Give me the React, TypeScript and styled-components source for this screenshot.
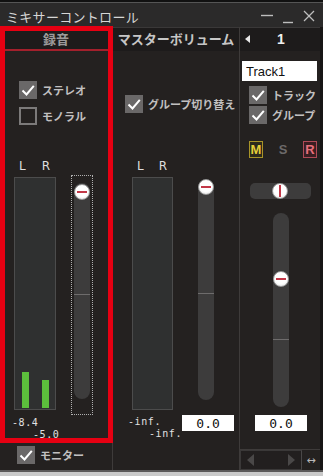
import styled, { createGlobalStyle } from "styled-components";

const Global = createGlobalStyle`
  html, body { margin: 0; padding: 0; background: #c9c9c9; }
  body { font-family: "Noto Sans CJK JP", "Noto Sans", sans-serif; }
`;

const JP = `"Noto Sans CJK JP", "Noto Sans", sans-serif`;
const MONO = `"DejaVu Sans Mono", "Liberation Mono", monospace`;

const CheckIcon = () => (
  <svg width="14" height="14" viewBox="0 0 14 14">
    <path d="M1.5 7.5 L5.5 11.5 L12.8 2.8" stroke="#fff" strokeWidth="2" fill="none" />
  </svg>
);

const Check = ({ checked, label, $mt = 0, $ml = 0 }: { checked?: boolean; label: string; $mt?: number; $ml?: number }) => (
  <CheckRow $mt={$mt} $ml={$ml}>
    <Box $checked={!!checked}>{checked && <CheckIcon />}</Box>
    <CheckLabel>{label}</CheckLabel>
  </CheckRow>
);

const Fader = ({ knob, tick, h, dotted }: { knob: number; tick: number; h: number; dotted?: boolean }) => {
  const track = (
    <Track $h={h}>
      <Tick $top={tick} />
      <Knob $top={knob} />
    </Track>
  );
  return dotted ? <DottedBox>{track}</DottedBox> : <PlainFader>{track}</PlainFader>;
};

export default function App() {
  return (
    <>
      <Global />
      <Window>
        <TopStrip />
        <TitleBar>
          <Title>ミキサーコントロール</Title>
          <WinButtons>
            <svg width="60" height="24" viewBox="0 0 60 24">
              <line x1="2" y1="12.5" x2="14" y2="12.5" stroke="#bdbdbd" strokeWidth="1.4" />
              <line x1="24" y1="19.5" x2="34" y2="19.5" stroke="#bdbdbd" strokeWidth="1.4" />
              <line x1="45" y1="8" x2="55" y2="18" stroke="#bdbdbd" strokeWidth="1.3" />
              <line x1="55" y1="8" x2="45" y2="18" stroke="#bdbdbd" strokeWidth="1.3" />
            </svg>
          </WinButtons>
        </TitleBar>

        <Columns>
          {/* 録音 */}
          <Column>
            <Tab $active>録音</Tab>
            <Check checked label="ステレオ" $mt={30} $ml={19} />
            <Check label="モノラル" $mt={8} $ml={19} />
            <Strip $mt={30} $ml={14} $gap={15}>
              <MeterBlock>
                <LR $w={42}>
                  <span>L</span>
                  <span>R</span>
                </LR>
                <Meter $w={42} $h={233}>
                  <Bar $level={36} />
                  <Bar $level={28} />
                </Meter>
              </MeterBlock>
              <FaderSlot $mt={20}>
                <Fader dotted h={216} knob={1} tick={111} />
              </FaderSlot>
            </Strip>
            <Readouts $ml={12} $mt={2}>
              <Reading>-8.4</Reading>
              <Reading $indent>-5.0</Reading>
            </Readouts>
            <Check checked label="モニター" $mt={5} $ml={17} />
          </Column>

          {/* マスターボリューム */}
          <Column $divider>
            <Tab>マスターボリューム</Tab>
            <Check checked label="グループ切り替え" $mt={44} $ml={12} />
            <Strip $mt={42} $ml={19} $gap={25}>
              <MeterBlock>
                <LR $w={41}>
                  <span>L</span>
                  <span>R</span>
                </LR>
                <Meter $w={41} $h={233} />
              </MeterBlock>
              <FaderSlot $mt={25}>
                <Fader h={220} knob={-1} tick={113} />
              </FaderSlot>
            </Strip>
            <ReadRow>
              <Readouts $ml={15} $mt={2}>
                <Reading>-inf.</Reading>
                <Reading $indent>-inf.</Reading>
              </Readouts>
              <ValueBox $ml={0} $push>0.0</ValueBox>
            </ReadRow>
          </Column>

          {/* Track */}
          <Column $divider>
            <Tab>
              <TabArrow />
              <TabNum>1</TabNum>
            </Tab>
            <TrackInput readOnly value="Track1" />
            <Check checked label="トラック" $mt={5} $ml={9} />
            <Check checked label="グループ" $mt={2} $ml={9} />
            <MSRRow>
              <MSR $kind="m">M</MSR>
              <MSR $kind="s">S</MSR>
              <MSR $kind="r">R</MSR>
            </MSRRow>
            <Pan>
              <PanKnob />
            </Pan>
            <CenterFader>
              <Track $h={194}>
                <Tick $top={126} />
                <Knob $top={58} />
              </Track>
            </CenterFader>
            <ValueBox $ml={15} $mt={8}>0.0</ValueBox>
            <ScrollRow>
              <ScrollTrack>
                <svg width="8" height="12" viewBox="0 0 8 12"><path d="M7 0 L0 6 L7 12Z" fill="#4a4848" /></svg>
                <svg width="8" height="12" viewBox="0 0 8 12"><path d="M1 0 L8 6 L1 12Z" fill="#4a4848" /></svg>
              </ScrollTrack>
              <Resize>↔</Resize>
            </ScrollRow>
          </Column>
        </Columns>
        <BottomEdge />
        <Highlight />
      </Window>
    </>
  );
}

const Window = styled.div`
  position: relative;
  width: 323px;
  height: 476px;
  background: #242120;
  display: flex;
  flex-direction: column;
  overflow: hidden;
`;

const TopStrip = styled.div`
  height: 3px;
  background: linear-gradient(#111 0 2px, #555 2px);
`;

const TitleBar = styled.div`
  height: 24px;
  background: #2b2a2a;
  display: flex;
  align-items: center;
  justify-content: space-between;
  padding: 0 8px 0 6px;
`;

const Title = styled.div`
  font-family: ${JP};
  font-size: 13px;
  color: #d6d6d6;
  letter-spacing: 0.3px;
  margin-top: 2px;
`;

const WinButtons = styled.div`
  display: flex;
  margin-right: -4px;
`;

const Columns = styled.div`
  flex: 1;
  display: grid;
  grid-template-columns: 112px 127px 1fr;
  border-right: 3px solid #171515;
`;

const Column = styled.div<{ $divider?: boolean }>`
  display: flex;
  flex-direction: column;
  border-left: ${(p) => (p.$divider ? "1px solid #3e3b3a" : "none")};
  min-width: 0;
`;

const Tab = styled.div<{ $active?: boolean }>`
  height: 24px;
  box-sizing: border-box;
  background: #1d1b1b;
  border-top: 1px solid #3a3838;
  border-bottom: 2px solid ${(p) => (p.$active ? "#a3202c" : "#1d1b1b")};
  display: flex;
  align-items: center;
  justify-content: center;
  font-family: ${JP};
  font-weight: 700;
  font-size: 13px;
  color: ${(p) => (p.$active ? "#9c9a9a" : "#c6c6c6")};
`;

const TabArrow = styled.span`
  width: 0;
  height: 0;
  border-top: 4px solid transparent;
  border-bottom: 4px solid transparent;
  border-right: 5px solid #e8e8e8;
  margin-right: 27px;
  margin-left: -30px;
`;

const TabNum = styled.span`
  font-family: "Liberation Sans", sans-serif;
  font-weight: 700;
  font-size: 14px;
  color: #f0f0f0;
`;

const CheckRow = styled.div<{ $mt: number; $ml: number }>`
  display: flex;
  align-items: center;
  gap: 5px;
  margin: ${(p) => p.$mt}px 0 0 ${(p) => p.$ml}px;
  height: 18px;
`;

const Box = styled.div<{ $checked: boolean }>`
  width: 18px;
  height: 18px;
  box-sizing: border-box;
  display: flex;
  align-items: center;
  justify-content: center;
  background: ${(p) => (p.$checked ? "#6a6868" : "transparent")};
  border: ${(p) => (p.$checked ? "1px solid #6a6868" : "2px solid #7c7a7a")};
`;

const CheckLabel = styled.span`
  font-family: ${JP};
  font-weight: 700;
  font-size: 11px;
  color: #c2c0c0;
  white-space: nowrap;
`;

const Strip = styled.div<{ $mt: number; $ml: number; $gap: number }>`
  display: flex;
  align-items: flex-start;
  gap: ${(p) => p.$gap}px;
  margin: ${(p) => p.$mt}px 0 0 ${(p) => p.$ml}px;
`;

const MeterBlock = styled.div`
  display: flex;
  flex-direction: column;
`;

const LR = styled.div<{ $w: number }>`
  width: ${(p) => p.$w}px;
  height: 22px;
  display: flex;
  justify-content: space-between;
  align-items: center;
  padding: 0 6px 0 5px;
  box-sizing: border-box;
  font-family: "DejaVu Sans", sans-serif;
  font-size: 12px;
  color: #dedede;
`;

const Meter = styled.div<{ $w: number; $h: number }>`
  width: ${(p) => p.$w}px;
  height: ${(p) => p.$h}px;
  box-sizing: border-box;
  background: #2f3030;
  border: 1px solid #4c4c4c;
  display: flex;
  align-items: flex-end;
  justify-content: space-between;
  padding: 0 6px 1px 7px;
`;

const Bar = styled.div<{ $level: number }>`
  width: 7px;
  height: ${(p) => p.$level}px;
  background: #5cbf3c;
`;

const FaderSlot = styled.div<{ $mt: number }>`
  margin-top: ${(p) => p.$mt}px;
`;

const DottedBox = styled.div`
  width: 22px;
  box-sizing: border-box;
  border: 1px dotted #b0b0b0;
  padding: 7px 2px 15px 2px;
`;

const PlainFader = styled.div`
  width: 16px;
`;

const Track = styled.div<{ $h: number }>`
  position: relative;
  width: 16px;
  height: ${(p) => p.$h}px;
  background: #3d3c3c;
  border-radius: 8px;
`;

const Tick = styled.div<{ $top: number }>`
  position: absolute;
  left: 0;
  right: 0;
  top: ${(p) => p.$top}px;
  height: 1px;
  background: #6e6c6c;
`;

const Knob = styled.div<{ $top: number }>`
  position: absolute;
  left: 0;
  top: ${(p) => p.$top}px;
  width: 16px;
  height: 16px;
  box-sizing: border-box;
  border-radius: 50%;
  background: radial-gradient(circle at 50% 40%, #ffffff 55%, #d6d6d6);
  border: 1px solid #9a9a9a;
  &::after {
    content: "";
    position: absolute;
    left: 2px;
    right: 2px;
    top: 6px;
    height: 2px;
    background: #c23848;
  }
`;

const Readouts = styled.div<{ $ml: number; $mt?: number }>`
  margin: ${(p) => p.$mt ?? 0}px 0 0 ${(p) => p.$ml}px;
  display: flex;
  flex-direction: column;
  flex-shrink: 0;
`;

const Reading = styled.div<{ $indent?: boolean }>`
  font-family: ${MONO};
  font-size: 10px;
  line-height: 12px;
  letter-spacing: 0.6px;
  color: #e2e2e2;
  white-space: nowrap;
  padding-left: ${(p) => (p.$indent ? 21 : 0)}px;
`;

const ReadRow = styled.div`
  display: flex;
  align-items: flex-start;
  margin-top: 4px;
`;

const ValueBox = styled.div<{ $ml: number; $mt?: number; $push?: boolean }>`
  margin: ${(p) => p.$mt ?? 1}px ${(p) => (p.$push ? "9px" : "0")} 0 ${(p) => (p.$push ? "auto" : `${p.$ml}px`)};
  width: 52px;
  height: 16px;
  flex-shrink: 0;
  background: #fff;
  display: flex;
  align-items: center;
  justify-content: center;
  font-family: ${MONO};
  font-size: 13px;
  color: #111;
`;

const TrackInput = styled.input`
  margin: 10px 0 0 2px;
  width: 75px;
  height: 20px;
  box-sizing: border-box;
  border: none;
  outline: none;
  padding: 0 4px;
  background: #fff;
  font-family: "Liberation Sans", sans-serif;
  font-size: 13px;
  color: #111;
`;

const MSRRow = styled.div`
  display: flex;
  align-items: center;
  gap: 13px;
  margin: 17px 0 0 9px;
`;

const msrColors = {
  m: { fg: "#e6cf3a", border: "#a89428", bg: "#2c2a1c" },
  s: { fg: "#6c6a6a", border: "transparent", bg: "transparent" },
  r: { fg: "#e8707c", border: "#b04a58", bg: "#3a1e22" },
};

const MSR = styled.div<{ $kind: "m" | "s" | "r" }>`
  width: 14px;
  height: 17px;
  box-sizing: border-box;
  display: flex;
  align-items: center;
  justify-content: center;
  font-family: "Liberation Sans", sans-serif;
  font-weight: 700;
  font-size: 13px;
  color: ${(p) => msrColors[p.$kind].fg};
  background: ${(p) => msrColors[p.$kind].bg};
  border: 1px solid ${(p) => msrColors[p.$kind].border};
`;

const Pan = styled.div`
  position: relative;
  margin: 25px 0 0 10px;
  width: 61px;
  height: 16px;
  border-radius: 5px;
  background: #3d3c3c;
`;

const PanKnob = styled.div`
  position: absolute;
  left: 22px;
  top: 0;
  width: 16px;
  height: 16px;
  box-sizing: border-box;
  border-radius: 50%;
  background: radial-gradient(circle at 50% 40%, #ffffff 55%, #d6d6d6);
  border: 1px solid #9a9a9a;
  &::after {
    content: "";
    position: absolute;
    top: 1px;
    bottom: 1px;
    left: 6px;
    width: 2px;
    background: #c23848;
  }
`;

const CenterFader = styled.div`
  margin: 14px 0 0 33px;
`;

const ScrollRow = styled.div`
  margin-top: auto;
  height: 20px;
  border-top: 1px solid #3e3b3a;
  display: flex;
`;

const ScrollTrack = styled.div`
  width: 62px;
  box-sizing: border-box;
  border: 1px solid #3a3838;
  border-right-color: #4a4848;
  background: #221f1f;
  display: flex;
  align-items: center;
  justify-content: space-between;
  padding: 0 6px;
`;

const Resize = styled.div`
  flex: 1;
  display: flex;
  align-items: center;
  justify-content: center;
  font-family: "DejaVu Sans", sans-serif;
  font-size: 11px;
  color: #b8b8b8;
`;

const BottomEdge = styled.div`
  height: 6px;
  background: linear-gradient(#5a5858 0 2px, #c9c9c9 2px);
`;

const Highlight = styled.div`
  position: absolute;
  left: 0;
  top: 26px;
  width: 113px;
  height: 417px;
  box-sizing: border-box;
  border: 5px solid #e60012;
  pointer-events: none;
`;
